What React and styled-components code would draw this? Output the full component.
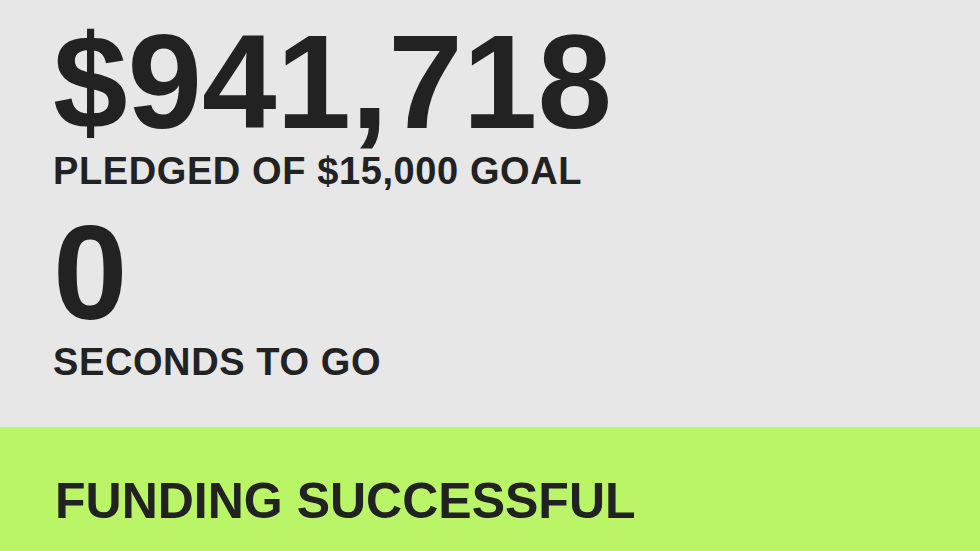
import React from "react";
import styled, { createGlobalStyle } from "styled-components";

const Global = createGlobalStyle`
  html, body { margin: 0; padding: 0; background: #e7e7e7; }
  body { font-family: "Liberation Sans", Arial, sans-serif; color: #222222; }
`;

const Page = styled.div`
  width: 980px;
  height: 551px;
  display: flex;
  flex-direction: column;
  overflow: hidden;
  background: #e7e7e7;
`;

const Stats = styled.div`
  display: flex;
  flex-direction: column;
  gap: 15px;
  padding: 15px 0 0 53px;
  height: 427px;
  box-sizing: border-box;
  flex-shrink: 0;
`;

const Stat = styled.div`
  display: flex;
  flex-direction: column;
  gap: 2px;
`;

const Number = styled.div`
  font-weight: 700;
  font-size: 134px;
  line-height: 134px;
  white-space: nowrap;
`;

const Label = styled.div`
  font-weight: 700;
  font-size: 38px;
  line-height: 40px;
  letter-spacing: 0.6px;
  text-transform: uppercase;
  white-space: nowrap;
`;

const Banner = styled.div`
  flex: 1;
  background: #b9f566;
  padding: 49px 0 0 55px;
`;

const BannerText = styled.div`
  font-weight: 700;
  font-size: 50px;
  line-height: 50px;
  text-transform: uppercase;
  white-space: nowrap;
`;

export default function App() {
  return (
    <>
      <Global />
      <Page>
        <Stats>
          <Stat>
            <Number>$941,718</Number>
            <Label>pledged of $15,000 goal</Label>
          </Stat>
          <Stat>
            <Number>0</Number>
            <Label>seconds to go</Label>
          </Stat>
        </Stats>
        <Banner>
          <BannerText>Funding successful</BannerText>
        </Banner>
      </Page>
    </>
  );
}
